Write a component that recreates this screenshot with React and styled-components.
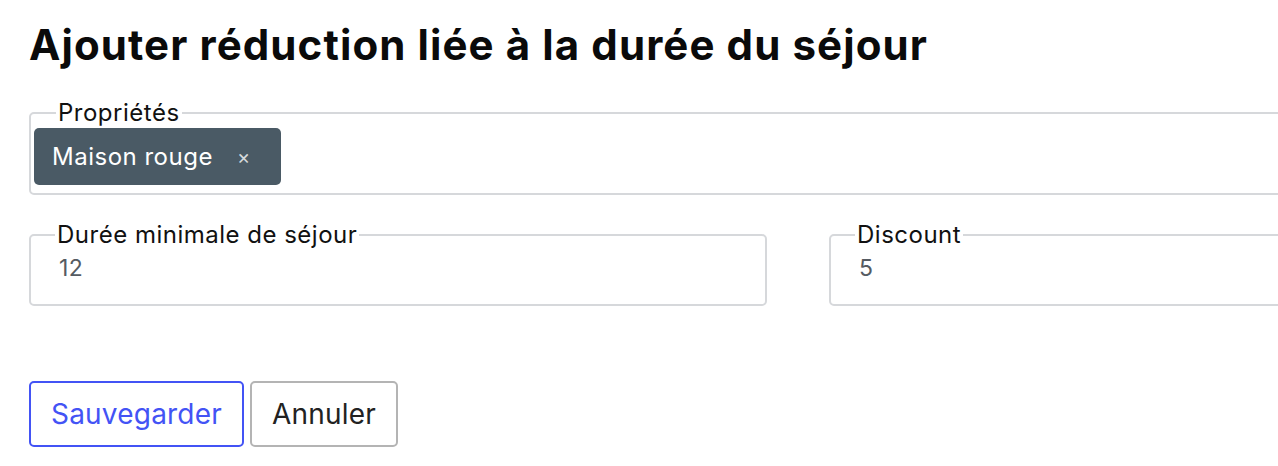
import React from 'react';
import styled, { createGlobalStyle } from 'styled-components';

const GlobalStyle = createGlobalStyle`
  html, body {
    margin: 0;
    padding: 0;
    background: #fff;
    overflow: hidden;
  }
  body {
    font-family: Inter, 'Noto Sans', sans-serif;
    color: #111;
  }
`;

const Page = styled.div`
  width: 1560px;
  padding: 20px 0 0 29px;
`;

const Title = styled.h1`
  margin: 0 0 30px 0;
  font-size: 42px;
  line-height: 50px;
  font-weight: 700;
  letter-spacing: 1.1px;
  color: #0a0a0a;
`;

const Field = styled.fieldset`
  margin: 0;
  box-sizing: border-box;
  border: 2px solid #d6d8db;
  border-radius: 5px;
  padding: ${p => (p.$chips ? '2px 3px 8px' : '0 28px 23px')};
  min-width: 0;
  width: ${p => p.$width || '100%'};
`;

const Legend = styled.legend`
  margin-left: ${p => (p.$chips ? '22px' : '-4px')};
  padding: 0 2px;
  font-size: 24px;
  line-height: 26px;
  letter-spacing: 0.5px;
  color: #111;
  background: #fff;
`;

const Value = styled.div`
  margin-top: 8px;
  font-size: 23px;
  line-height: 25px;
  letter-spacing: 0.4px;
  color: #555b62;
`;

const Chip = styled.span`
  display: inline-flex;
  align-items: center;
  height: 57px;
  padding: 0 30px 0 18px;
  background: #4a5a65;
  border-radius: 5px;
  color: #fff;
  font-size: 24px;
  letter-spacing: 0.5px;
  box-sizing: border-box;
`;

const Remove = styled.span`
  margin-left: 24px;
  font-size: 20px;
  color: #d5dadd;
`;

const Row = styled.div`
  display: flex;
  gap: 62px;
  margin-top: 27px;
`;

const Actions = styled.div`
  display: flex;
  gap: 6px;
  margin-top: 75px;
`;

const Button = styled.button`
  font-family: Inter, 'Noto Sans', sans-serif;
  font-size: 28px;
  letter-spacing: 0.2px;
  height: 66px;
  padding: 0 20px;
  background: #fff;
  border-radius: 5px;
  border: 2px solid ${p => (p.$primary ? '#4353f5' : '#b4b4b4')};
  color: ${p => (p.$primary ? '#4353f5' : '#222')};
  cursor: pointer;
`;

export default function App() {
  return (
    <>
      <GlobalStyle />
      <Page>
        <Title>Ajouter réduction liée à la durée du séjour</Title>
        <Field $chips>
          <Legend $chips>Propriétés</Legend>
          <Chip>
            Maison rouge
            <Remove>×</Remove>
          </Chip>
        </Field>
        <Row>
          <Field $width="738px">
            <Legend>Durée minimale de séjour</Legend>
            <Value>12</Value>
          </Field>
          <Field $width="738px">
            <Legend>Discount</Legend>
            <Value>5</Value>
          </Field>
        </Row>
        <Actions>
          <Button $primary>Sauvegarder</Button>
          <Button>Annuler</Button>
        </Actions>
      </Page>
    </>
  );
}
